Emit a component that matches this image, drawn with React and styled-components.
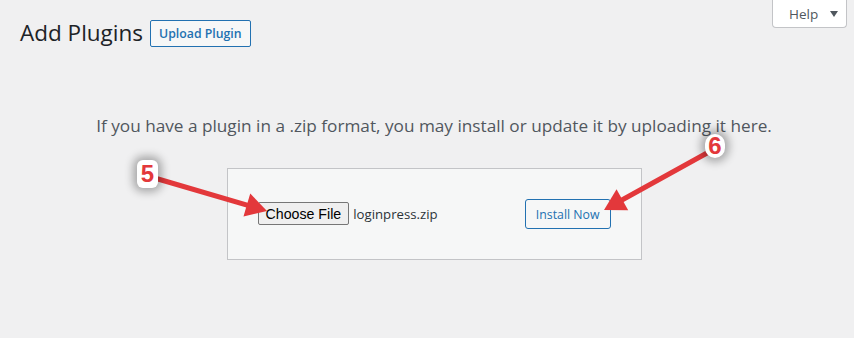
import React from 'react';
import styled, { createGlobalStyle } from 'styled-components';

const GlobalStyle = createGlobalStyle`
	html, body {
		margin: 0;
		padding: 0;
		background: #f0f0f1;
	}
	body {
		font-family: 'Open Sans', 'Noto Sans', sans-serif;
		color: #1d2327;
	}
`;

const Page = styled.div`
	position: relative;
	width: 854px;
	height: 338px;
	overflow: hidden;
	box-sizing: border-box;
	padding: 0 6px 0 20px;
`;

const HelpTab = styled.button`
	float: right;
	margin-right: 1px;
	box-sizing: border-box;
	width: 75px;
	display: flex;
	align-items: center;
	gap: 12px;
	height: 28px;
	padding: 0 0 0 16px;
	background: #fff;
	border: 1px solid #c3c4c7;
	border-top: none;
	border-radius: 0 0 4px 4px;
	color: #50575e;
	font-family: 'Open Sans', sans-serif;
	font-size: 13.5px;
`;

const Caret = styled.span`
	width: 0;
	height: 0;
	border-left: 4px solid transparent;
	border-right: 4px solid transparent;
	border-top: 6px solid #50575e;
`;

const Header = styled.div`
	display: flex;
	align-items: center;
	padding-top: 18px;
`;

const Title = styled.h1`
	margin: 0 7px 0 0;
	font-size: 22.5px;
	font-weight: 400;
	line-height: 30px;
	color: #1d2327;
`;

const OutlineButton = styled.button`
	box-sizing: border-box;
	height: ${(p) => (p.$tall ? '30px' : '27px')};
	padding: 0 ${(p) => (p.$tall ? '10px' : '8px')};
	background: #f6f7f7;
	border: 1px solid #2271b1;
	border-radius: ${(p) => (p.$tall ? '3px' : '2px')};
	color: #2271b1;
	font-family: 'Open Sans', sans-serif;
	font-size: ${(p) => (p.$tall ? '12.3px' : '12.3px')};
	font-weight: ${(p) => (p.$tall ? 400 : 600)};
	white-space: nowrap;
`;

const Help = styled.p`
	margin: 65px 0 29px;
	text-align: center;
	font-size: 17.2px;
	line-height: 26px;
	color: #50575e;
`;

const UploadForm = styled.div`
	box-sizing: border-box;
	width: 415px;
	margin: 0 auto;
	padding: 30px;
	display: flex;
	justify-content: space-between;
	align-items: center;
	background: #f6f7f7;
	border: 1px solid #c3c4c7;
`;

const FileField = styled.div`
	display: flex;
	align-items: center;
	gap: 4px;
	margin-top: -1px;
`;

const ChooseButton = styled.button`
	box-sizing: border-box;
	height: 23px;
	padding: 0 7px;
	background: #efefef;
	border: 1px solid #767676;
	border-radius: 2px;
	color: #000;
	font-family: 'Liberation Sans', Arial, sans-serif;
	font-size: 14.2px;
`;

const FileName = styled.span`
	font-size: 13.2px;
	color: #2c3338;
`;

const Overlay = styled.svg`
	position: absolute;
	left: 0;
	top: 0;
	pointer-events: none;
`;

const Badge = styled.div`
	position: absolute;
	left: ${(p) => p.$x}px;
	top: ${(p) => p.$y}px;
	width: ${(p) => p.$w}px;
	height: ${(p) => p.$h}px;
	display: flex;
	align-items: center;
	justify-content: center;
	background: #fff;
	border-radius: ${(p) => p.$r}px;
	box-shadow: 0 0 9px 4px rgba(0, 0, 0, 0.3);
	color: #e3383b;
	font-family: 'Liberation Sans', Arial, sans-serif;
	font-weight: 700;
	font-size: 24px;
	line-height: 1;
`;

const arrow = (x1, y1, x2, y2, len, half) => {
	const dx = x2 - x1;
	const dy = y2 - y1;
	const d = Math.hypot(dx, dy);
	const ux = dx / d;
	const uy = dy / d;
	const bx = x2 - ux * len;
	const by = y2 - uy * len;
	const px = -uy;
	const py = ux;
	return {
		line: { x1, y1, x2: bx + ux * 2, y2: by + uy * 2 },
		head: `${x2},${y2} ${bx + px * half},${by + py * half} ${bx - px * half},${by - py * half}`,
	};
};

const Arrow = ({ from, to }) => {
	const a = arrow(from[0], from[1], to[0], to[1], 21, 12);
	return (
		<g>
			<line {...a.line} stroke="#e3383b" strokeWidth="5" strokeLinecap="round" />
			<polygon points={a.head} fill="#e3383b" />
		</g>
	);
};

export default function App() {
	return (
		<Page>
			<GlobalStyle />
			<HelpTab>
				Help <Caret />
			</HelpTab>
			<Header>
				<Title>Add Plugins</Title>
				<OutlineButton>Upload Plugin</OutlineButton>
			</Header>
			<Help>
				If you have a plugin in a .zip format, you may install or update it by
				uploading it here.
			</Help>
			<UploadForm>
				<FileField>
					<ChooseButton>Choose File</ChooseButton>
					<FileName>loginpress.zip</FileName>
				</FileField>
				<OutlineButton $tall>Install Now</OutlineButton>
			</UploadForm>
			<Overlay width="854" height="338">
				<Arrow from={[158, 179]} to={[267, 211]} />
				<Arrow from={[707, 153]} to={[604, 210]} />
			</Overlay>
			<Badge $x={137} $y={160} $w={21} $h={28} $r={6}>
				5
			</Badge>
			<Badge $x={705} $y={134} $w={20} $h={24} $r={10}>
				6
			</Badge>
		</Page>
	);
}
